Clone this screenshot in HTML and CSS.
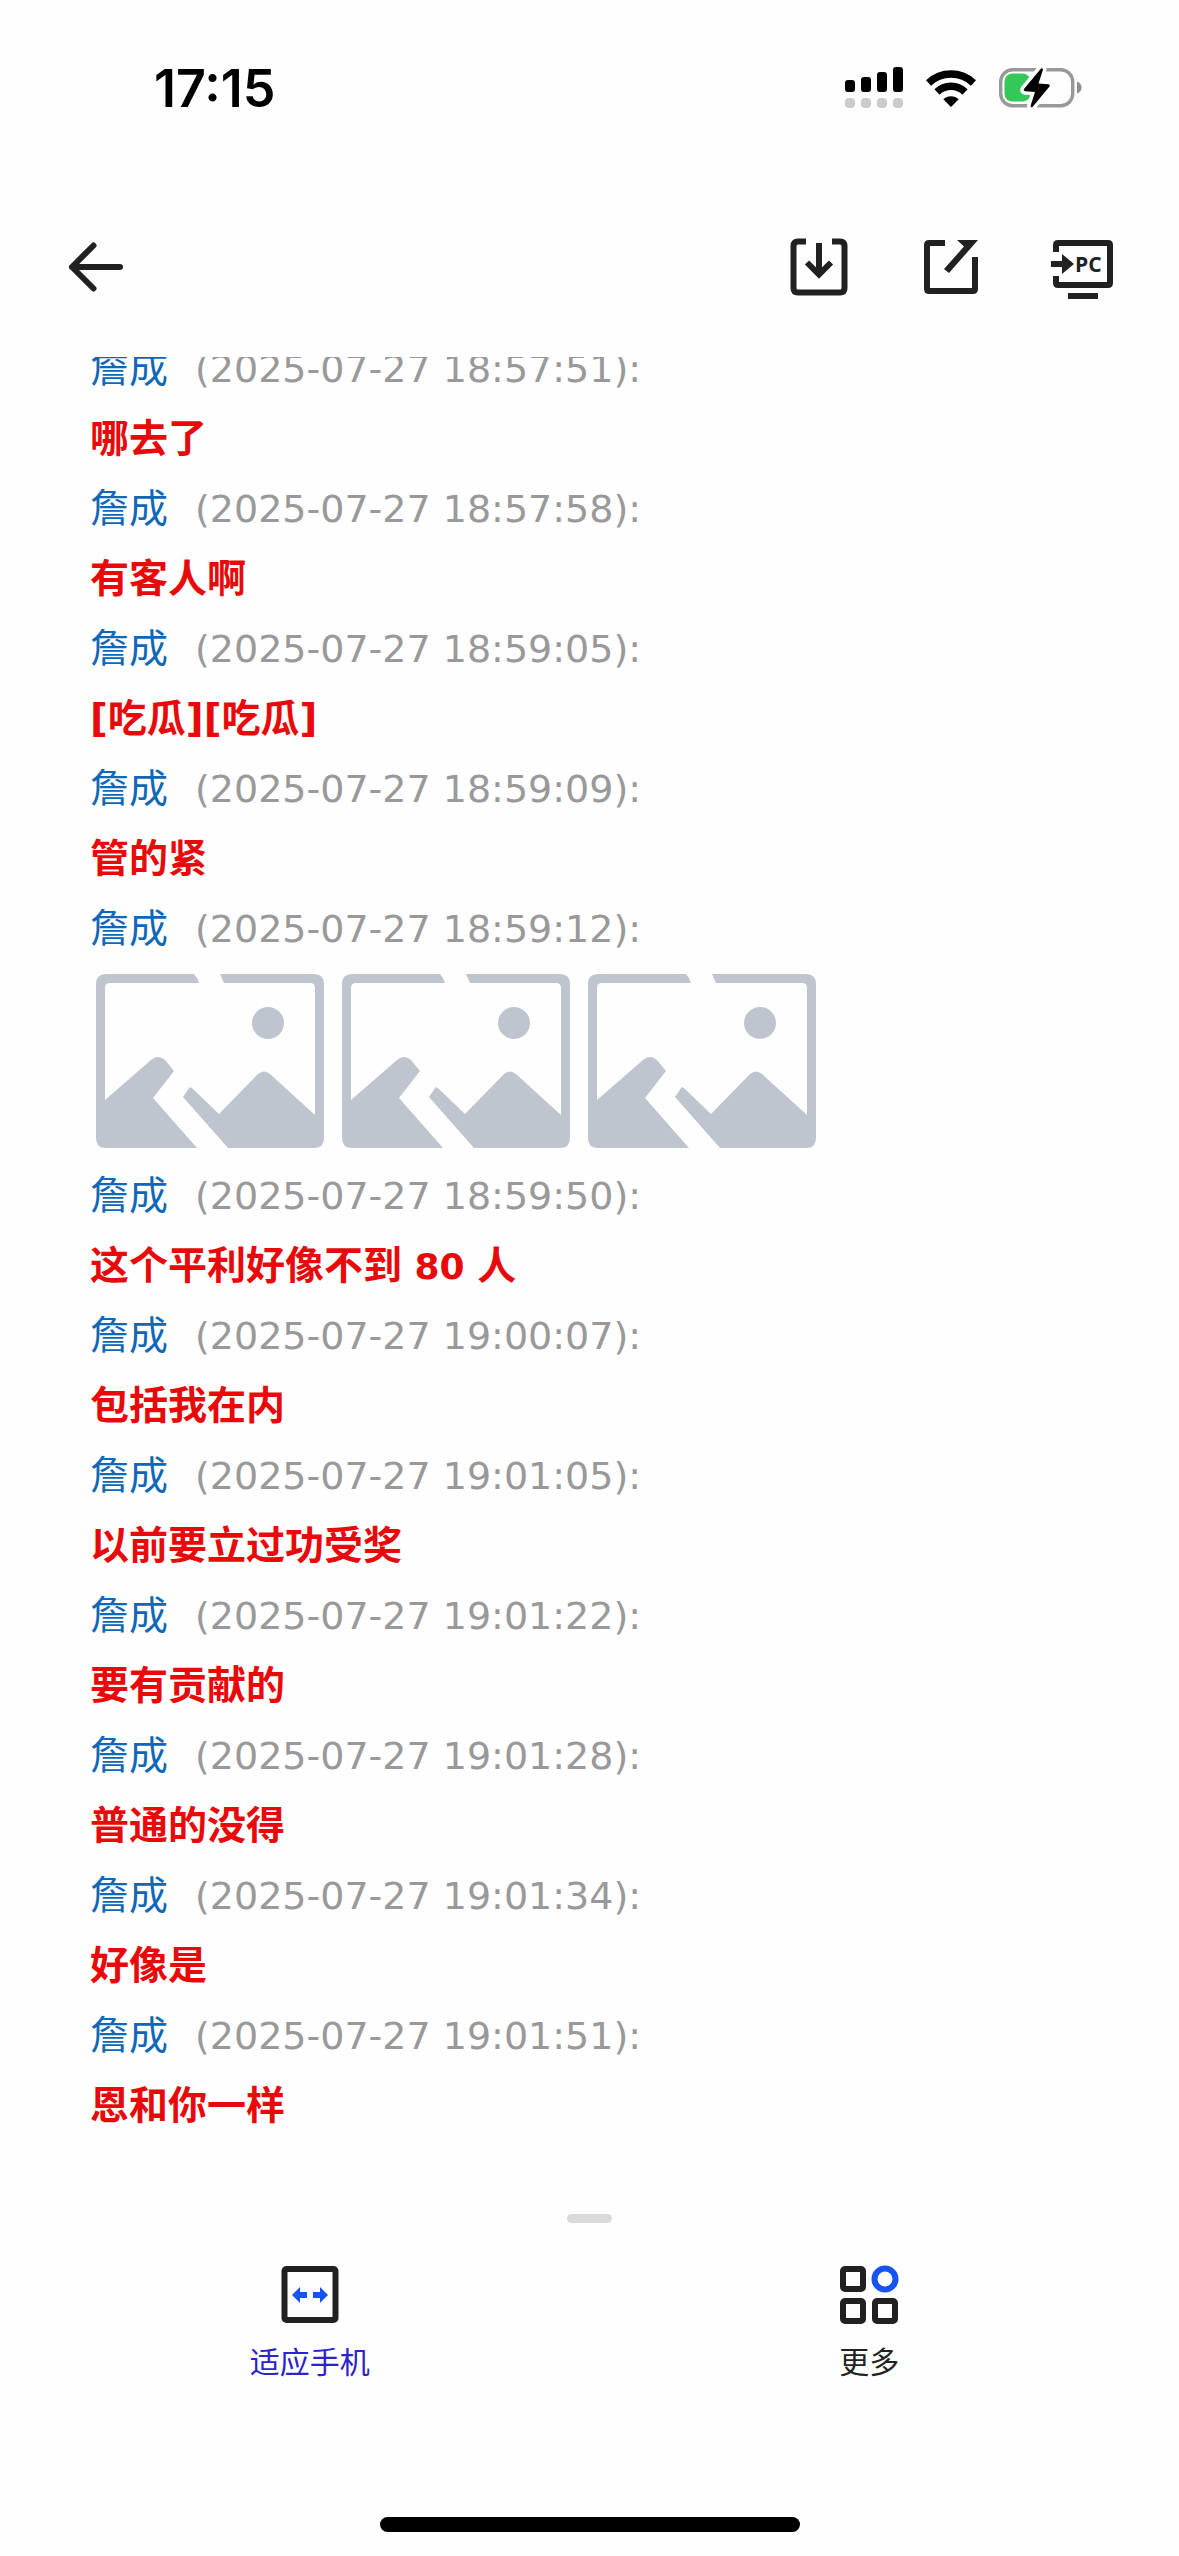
FILE: index.html
```html
<!DOCTYPE html>
<html lang="zh-CN">
<head>
  <meta charset="utf-8">
  <title>聊天记录</title>
  <meta name="viewport" content="width=device-width, initial-scale=1.0">
  <link rel="stylesheet" href="styles.css">
</head>
<body>
  <div class="status-bar">
    <span class="clock">17:15</span>
    <div class="status-icons">
      <svg width="58" height="42" viewBox="0 0 58 42">
        <rect x="0" y="13" width="10" height="12" rx="3"/>
        <rect x="16" y="10" width="10" height="15" rx="3"/>
        <rect x="32" y="5" width="10" height="20" rx="3"/>
        <rect x="48" y="0" width="10" height="25" rx="3"/>
        <g fill="#cccccc">
          <rect x="0" y="31" width="10" height="10" rx="4"/>
          <rect x="16" y="31" width="10" height="10" rx="4"/>
          <rect x="32" y="31" width="10" height="10" rx="4"/>
          <rect x="48" y="31" width="10" height="10" rx="4"/>
        </g>
      </svg>
      <svg width="50" height="38" viewBox="0 0 50 38">
        <path d="M2.5 14A32.7 32.7 0 0 1 47.5 14M11 23A20.2 20.2 0 0 1 39 23" fill="none" stroke="#000" stroke-width="7.5"/>
        <path d="M25 38L17.3 30.3A11 11 0 0 1 32.7 30.3Z"/>
      </svg>
      <svg width="84" height="40" viewBox="0 0 84 40">
        <rect x="1.7" y="1.7" width="72" height="36" rx="12" fill="none" stroke="#999" stroke-width="3.4"/>
        <path d="M78 13.5Q82.5 15 82.5 19.5Q82.5 24 78 25.5Z" fill="#8e8e8e"/>
        <rect x="5.5" y="5.5" width="26" height="28" rx="8" fill="#34c759"/>
        <path d="M42 0.5L25 21Q24 23 26.3 23.3L36 24L31.5 38Q32 40 33.5 39L50.5 18.5Q51.5 16.6 49.3 16.3L39.5 15.6L44 1.5Q43.5 -0.5 42 0.5Z" stroke="#fff" stroke-width="7" paint-order="stroke"/>
      </svg>
    </div>
  </div>

  <header class="header">
    <button class="icon-btn" aria-label="返回">
      <svg width="64" height="66" viewBox="0 0 64 66" fill="none" stroke="#212121" stroke-width="6" stroke-linecap="round" stroke-linejoin="round">
        <path d="M56 33H8M29.5 11.5L8 33L29.5 54.5"/>
      </svg>
    </button>
    <div class="actions">
      <button class="icon-btn" aria-label="下载">
        <svg width="64" height="66" viewBox="0 0 64 66" fill="none" stroke="#212121" stroke-width="6">
          <path d="M19 7.5H11Q6.5 7.5 6.5 12V54Q6.5 58.5 11 58.5H53Q57.5 58.5 57.5 54V12Q57.5 7.5 53 7.5H45"/>
          <path d="M32 9V39M20 28.5L32 40.5L44 28.5"/>
        </svg>
      </button>
      <button class="icon-btn" aria-label="分享">
        <svg width="64" height="66" viewBox="0 0 64 66">
          <path d="M26 9H10Q8 9 8 11V55Q8 57 10 57H54Q56 57 56 55V23" fill="none" stroke="#212121" stroke-width="6"/>
          <path d="M38 6H59L30 39L25 35L45 12.5Z" fill="#212121"/>
        </svg>
      </button>
      <button class="icon-btn" aria-label="传到电脑">
        <svg width="64" height="66" viewBox="0 0 64 66" fill="#212121">
          <path d="M5 18V11Q5 9 7 9H57Q59 9 59 11V49Q59 51 57 51H7Q5 51 5 49V42" fill="none" stroke="#212121" stroke-width="6"/>
          <path d="M0 27H11V20L23 30L11 40V33H0Z"/>
          <rect x="17" y="59" width="30" height="6"/>
          <text class="pc-text" x="24" y="38">PC</text>
        </svg>
      </button>
    </div>
  </header>

  <main class="viewer">
    <ul class="messages">
      <li><div class="meta"><span class="name">詹成</span><time>(2025-07-27 18:57:51):</time></div><p>哪去了</p></li>
      <li><div class="meta"><span class="name">詹成</span><time>(2025-07-27 18:57:58):</time></div><p>有客人啊</p></li>
      <li><div class="meta"><span class="name">詹成</span><time>(2025-07-27 18:59:05):</time></div><p>[吃瓜][吃瓜]</p></li>
      <li><div class="meta"><span class="name">詹成</span><time>(2025-07-27 18:59:09):</time></div><p>管的紧</p></li>
      <li>
        <div class="meta"><span class="name">詹成</span><time>(2025-07-27 18:59:12):</time></div>
        <div class="pictures">
          <svg width="228" height="174" viewBox="0 0 228 174">
            <g id="broken">
              <path d="M103 9H14Q9 9 9 14V126L55 86Q62 80 69 86L78 97L57 124L101 174H10Q0 174 0 164V10Q0 0 10 0H98Q101 3 103 9Z"/>
              <path d="M124 0H218Q228 0 228 10V164Q228 174 218 174H132L87 123L93 114Q94 112 97 115L123 140L162 100Q168 95 174 100L219 141V14Q219 9 214 9H128Z"/>
              <circle cx="172" cy="49" r="16"/>
            </g>
          </svg>
          <svg width="228" height="174" viewBox="0 0 228 174"><use href="#broken"/></svg>
          <svg width="228" height="174" viewBox="0 0 228 174"><use href="#broken"/></svg>
        </div>
      </li>
      <li><div class="meta"><span class="name">詹成</span><time>(2025-07-27 18:59:50):</time></div><p>这个平利好像不到<span class="num"> 80 </span>人</p></li>
      <li><div class="meta"><span class="name">詹成</span><time>(2025-07-27 19:00:07):</time></div><p>包括我在内</p></li>
      <li><div class="meta"><span class="name">詹成</span><time>(2025-07-27 19:01:05):</time></div><p>以前要立过功受奖</p></li>
      <li><div class="meta"><span class="name">詹成</span><time>(2025-07-27 19:01:22):</time></div><p>要有贡献的</p></li>
      <li><div class="meta"><span class="name">詹成</span><time>(2025-07-27 19:01:28):</time></div><p>普通的没得</p></li>
      <li><div class="meta"><span class="name">詹成</span><time>(2025-07-27 19:01:34):</time></div><p>好像是</p></li>
      <li><div class="meta"><span class="name">詹成</span><time>(2025-07-27 19:01:51):</time></div><p>恩和你一样</p></li>
    </ul>
  </main>

  <footer class="footer">
    <div class="grabber"></div>
    <nav class="tabs">
      <button class="tab active">
        <svg width="60" height="60" viewBox="0 0 60 60">
          <rect x="4.5" y="4" width="51" height="51" rx="2" fill="none" stroke="#212121" stroke-width="6"/>
          <path d="M12 30L20 22V27H27V33H20V38ZM48 30L40 22V27H33V33H40V38Z" fill="#1554f0"/>
        </svg>
        <span>适应手机</span>
      </button>
      <button class="tab">
        <svg width="60" height="60" viewBox="0 0 60 60" fill="none" stroke="#212121" stroke-width="6">
          <rect x="4" y="4" width="20" height="20" rx="2"/>
          <rect x="4" y="36" width="20" height="20" rx="2"/>
          <rect x="36" y="36" width="20" height="20" rx="2"/>
          <circle cx="46" cy="14" r="10.5" stroke="#1554f0"/>
        </svg>
        <span>更多</span>
      </button>
    </nav>
    <div class="home-bar"></div>
  </footer>
</body>
</html>
```
FILE: styles.css
```css
* {
  box-sizing: border-box;
}

body {
  margin: 0;
  min-height: 100vh;
  display: flex;
  flex-direction: column;
  background-color: #fefefe;
  font-family: "DejaVu Sans", "Noto Sans CJK SC", sans-serif;
}

svg {
  display: block;
}

button {
  padding: 0;
  border: none;
  background: none;
  cursor: pointer;
}

.status-bar {
  display: flex;
  justify-content: space-between;
  align-items: center;
  height: 176px;
  padding: 0 96px 0 154px;
}

.clock {
  font-family: Inter, sans-serif;
  font-size: 52px;
  font-weight: 600;
  color: #000;
}

.status-icons {
  display: flex;
  align-items: center;
  gap: 23px;
}

.header {
  display: flex;
  justify-content: space-between;
  align-items: center;
  height: 181px;
  padding: 0 64px;
}

.actions {
  display: flex;
  gap: 68px;
}

.pc-text {
  font-family: "Open Sans", sans-serif;
  font-size: 21px;
  font-weight: bold;
}

/* the list is scrolled a little, so its first line is cut off */
.viewer {
  overflow: hidden;
}

.messages {
  list-style: none;
  margin: -23px 0 0;
  padding: 0 90px;
}

.meta,
.messages p {
  margin: 0;
  height: 70px;
  line-height: 70px;
  font-size: 39px;
  white-space: nowrap;
}

.meta {
  display: flex;
  gap: 27px;
}

.name {
  color: #0f67b8;
}

time {
  font-size: 38px;
  color: #999;
}

.messages p {
  font-weight: bold;
  color: #e80a0a;
}

.messages .num {
  font-size: 36px;
}

.pictures {
  display: flex;
  gap: 18px;
  padding: 10px 6px 13px;
  fill: #bfc5cf;
}

.footer {
  display: flex;
  flex-direction: column;
  align-items: center;
  margin-top: auto;
  padding: 0 30px 24px;
}

.grabber {
  width: 45px;
  height: 9px;
  border-radius: 5px;
  background-color: #dadada;
}

.tabs {
  display: flex;
  width: 100%;
  padding: 42px 0 139px;
}

.tab {
  flex: 1;
  display: flex;
  flex-direction: column;
  align-items: center;
  gap: 17px;
  font-family: "Noto Sans CJK SC", sans-serif;
  font-size: 30px;
  line-height: 36px;
  color: #212121;
}

.tab.active {
  color: #2b23cc;
}

.home-bar {
  width: 420px;
  height: 15px;
  border-radius: 8px;
  background-color: #000;
}
```
